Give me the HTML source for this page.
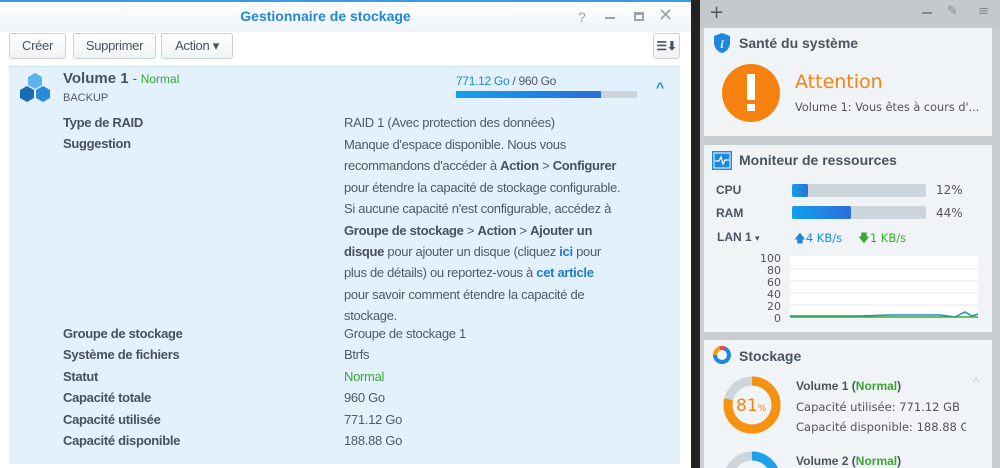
<!DOCTYPE html>
<html><head><meta charset="utf-8"><style>
*{margin:0;padding:0;box-sizing:border-box}
html,body{width:1000px;height:468px;overflow:hidden}
body{position:relative;background:#c9ced3;font-family:"Liberation Sans",sans-serif;color:#404a55}
#root{position:absolute;left:0;top:0;width:1000px;height:468px;overflow:hidden}
.abs{position:absolute}
#win{left:0;top:0;width:691px;height:468px;background:#fff;border-top:2px solid #3a9ae0}
#title{left:0;top:0;width:691px;height:30px;background:linear-gradient(#fff,#eef4fa);text-align:center;font:bold 14px "Liberation Sans",sans-serif;color:#1e88d8;line-height:28px;padding-right:40px}
.btn{top:31px;height:26px;border:1px solid #c8d0d8;border-radius:3px;background:linear-gradient(#fff,#f0f3f6);font-size:13px;line-height:24px;text-align:center;color:#4a5560;letter-spacing:-0.3px}
#panel{left:9px;top:64px;width:671px;height:398px;background:#e3f1fc;border-top:1px solid #cfe2f2}
.lbl{left:63px;font-weight:bold;font-size:13px;color:#47525d;letter-spacing:-0.3px}
.val{left:344px;font-size:13px;color:#4f5a65;letter-spacing:-0.3px}
.val b{color:#47525d}
.lk{color:#1e7ccc;font-weight:bold}
#sep{left:691px;top:0;width:9px;height:468px;background:#222}
.w{left:704px;width:288px;background:#f1f4f7}
.wt{font-weight:bold;font-size:14px;color:#4a545e;font-family:"Liberation Sans",sans-serif}
.ds{font-family:"DejaVu Sans",sans-serif}
</style></head><body><div id="root">
<div id="win" class="abs">
 <div id="title" class="abs">Gestionnaire de stockage</div>
 <div class="abs" style="left:578px;top:7px;font-size:14px;color:#9aa3ac">?</div>
 <div class="abs" style="left:605px;top:15px;width:10px;height:2px;background:#9aa3ac"></div>
 <div class="abs" style="left:634px;top:10px;width:10px;height:9px;border:2px solid #9aa3ac;border-top-width:3px"></div>
 <div class="abs" style="left:658px;top:3px;font-size:18px;color:#9aa3ac;font-family:'DejaVu Sans',sans-serif">✕</div>
 <div class="btn abs" style="left:9px;width:57px">Créer</div>
 <div class="btn abs" style="left:73px;width:83px">Supprimer</div>
 <div class="btn abs" style="left:161px;width:72px">Action ▾</div>
 <div class="btn abs" style="left:653px;width:27px;font-weight:bold;font-size:12px">☰⬇</div>
 <div id="panel" class="abs"></div>
 <svg class="abs" style="left:18px;top:70px" width="34" height="32" viewBox="0 0 34 32">
  <path d="M17 1l7 4v8l-7 4-7-4V5z" fill="#5ab4f0"/><path d="M9 14l7 4v8l-7 4-7-4v-8z" fill="#1a6cb4"/><path d="M25 14l7 4v8l-7 4-7-4v-8z" fill="#2a8ad8"/>
 </svg>
 <div class="abs" style="left:63px;top:68px;font-size:15px;font-weight:bold;color:#47525d">Volume 1 <span style="font-weight:normal;font-size:13px">- </span><span style="color:#3aa830;font-size:12px;font-weight:normal">Normal</span></div>
 <div class="abs" style="left:63px;top:90px;font-size:11px;color:#505a64">BACKUP</div>
 <div class="abs" style="left:456px;top:72px;font-size:12px;color:#4f5a65;letter-spacing:-0.3px"><span style="color:#1e88d8">771.12 Go</span> / 960 Go</div>
 <div class="abs" style="left:456px;top:89px;width:181px;height:7px;background:#ccd4dc"><div style="width:145px;height:7px;background:linear-gradient(90deg,#12a0ec,#2c6ed8)"></div></div>
 <div class="abs" style="left:656px;top:77px;font-size:14px;color:#1e88d8;font-weight:bold">^</div>
 <div class="lbl abs" style="top:113px">Type de RAID</div>
 <div class="val abs" style="top:113px">RAID 1 (Avec protection des données)</div>
 <div class="lbl abs" style="top:134px">Suggestion</div>
 <div class="val abs" style="top:132px;width:300px;line-height:21.4px">Manque d'espace disponible. Nous vous<br>recommandons d'accéder à <b>Action</b> &gt; <b>Configurer</b><br>pour étendre la capacité de stockage configurable.<br>Si aucune capacité n'est configurable, accédez à<br><b>Groupe de stockage</b> &gt; <b>Action</b> &gt; <b>Ajouter un</b><br><b>disque</b> pour ajouter un disque (cliquez <span class="lk">ici</span> pour<br>plus de détails) ou reportez-vous à <span class="lk">cet article</span><br>pour savoir comment étendre la capacité de<br>stockage.</div>
 <div class="lbl abs" style="top:324px">Groupe de stockage</div><div class="val abs" style="top:324px">Groupe de stockage 1</div>
 <div class="lbl abs" style="top:345px">Système de fichiers</div><div class="val abs" style="top:345px">Btrfs</div>
 <div class="lbl abs" style="top:367px">Statut</div><div class="val abs" style="top:367px;color:#3aa830">Normal</div>
 <div class="lbl abs" style="top:388px">Capacité totale</div><div class="val abs" style="top:388px">960 Go</div>
 <div class="lbl abs" style="top:410px">Capacité utilisée</div><div class="val abs" style="top:410px">771.12 Go</div>
 <div class="lbl abs" style="top:431px">Capacité disponible</div><div class="val abs" style="top:431px">188.88 Go</div>
</div>
<div id="sep" class="abs"></div>
<div class="abs" style="left:700px;top:0;width:300px;height:28px;background:#c4c9ce"></div>
<div class="abs ds" style="left:709px;top:2px;font-size:18px;color:#555">+</div>
<div class="abs" style="left:922px;top:12px;width:10px;height:2px;background:#888"></div>
<div class="abs ds" style="left:947px;top:4px;font-size:13px;color:#888">✎</div>
<div class="abs ds" style="left:978px;top:4px;font-size:13px;color:#888">≡</div>
<div class="w abs" style="top:28px;height:108px"></div>
<svg class="abs" style="left:712px;top:32px" width="20" height="22" viewBox="0 0 20 22"><path d="M10 1l8 3v7c0 5-4 9-8 10-4-1-8-5-8-10V4z" fill="#1e88e0"/><text x="10" y="16" fill="#fff" font-size="12" font-weight="bold" font-style="italic" text-anchor="middle" font-family="Liberation Serif">i</text></svg>
<div class="abs wt" style="left:739px;top:35px">Santé du système</div>
<div class="abs" style="left:722px;top:64px;width:58px;height:58px;border-radius:50%;background:#f5820f"></div>
<div class="abs" style="left:747px;top:74px;width:8px;height:26px;background:#fff"></div>
<div class="abs" style="left:747px;top:104px;width:8px;height:7px;background:#fff"></div>
<div class="abs ds" style="left:795px;top:71px;font-size:19px;color:#f5820f">Attention</div>
<div class="abs ds" style="left:795px;top:101px;font-size:11.3px;color:#555;width:192px;white-space:nowrap;overflow:hidden">Volume 1: Vous êtes à cours d'...</div>
<div class="w abs" style="top:145px;height:187px"></div>
<svg class="abs" style="left:712px;top:151px" width="20" height="19" viewBox="0 0 20 19"><rect x="0.5" y="0.5" width="19" height="18" fill="#1e88e0" stroke="#1e88e0"/><rect x="2" y="2" width="16" height="15" fill="none" stroke="#fff" stroke-width="1"/><path d="M3 10h4l2-4 2 7 2-4h4" stroke="#fff" fill="none" stroke-width="1.3"/></svg>
<div class="abs wt" style="left:739px;top:152px">Moniteur de ressources</div>
<div class="abs wt" style="left:716px;top:183px;font-size:12px">CPU</div>
<div class="abs" style="left:792px;top:184px;width:134px;height:13px;background:#ccd4dc;border-radius:2px"><div style="width:16px;height:13px;background:linear-gradient(90deg,#12a0ec,#2c6ed8);border-radius:2px"></div></div>
<div class="abs ds" style="left:936px;top:183px;font-size:12px;color:#555">12%</div>
<div class="abs wt" style="left:716px;top:206px;font-size:12px">RAM</div>
<div class="abs" style="left:792px;top:206px;width:134px;height:13px;background:#ccd4dc;border-radius:2px"><div style="width:59px;height:13px;background:linear-gradient(90deg,#12a0ec,#2c6ed8);border-radius:2px"></div></div>
<div class="abs ds" style="left:936px;top:206px;font-size:12px;color:#555">44%</div>
<div class="abs wt" style="left:717px;top:230px;font-size:12px">LAN 1 <span style="font-size:9px;font-weight:normal">▾</span></div>
<div class="abs ds" style="left:794px;top:231px;font-size:11.5px;color:#1e88e0">🡅4 KB/s</div>
<div class="abs ds" style="left:858px;top:231px;font-size:11.5px;color:#3aa830">🡇1 KB/s</div>
<div class="abs" style="left:790px;top:256px;width:188px;height:62px;background:#fff"></div>
<svg class="abs" style="left:760px;top:250px" width="222" height="75">
 <g font-family="DejaVu Sans" font-size="11" fill="#555" text-anchor="end">
 <text x="21" y="12">100</text><text x="21" y="24">80</text><text x="21" y="36">60</text><text x="21" y="48">40</text><text x="21" y="60">20</text><text x="21" y="72">0</text></g>
 <g stroke="#e6ebf0"><line x1="30" y1="19" x2="218" y2="19"/><line x1="30" y1="31" x2="218" y2="31"/><line x1="30" y1="43" x2="218" y2="43"/><line x1="30" y1="55" x2="218" y2="55"/></g>
 <path d="M30 66L100 66L130 65L180 65L195 67L205 62L212 66L218 64" stroke="#1e88e0" fill="none" stroke-width="1.5"/>
 <path d="M30 67L218 67" stroke="#3aa830" fill="none" stroke-width="1.5"/>
</svg>
<div class="w abs" style="top:340px;height:128px"></div>
<svg class="abs" style="left:712px;top:345px" width="20" height="20" viewBox="0 0 20 20"><circle cx="10" cy="10" r="7" fill="none" stroke="#1e88e0" stroke-width="4"/><path d="M3 10A7 7 0 0 1 8 3.2" stroke="#f5a00f" stroke-width="4" fill="none"/><path d="M8 3.2A7 7 0 0 1 13 3.7" stroke="#e84a4a" stroke-width="4" fill="none"/></svg>
<div class="abs wt" style="left:739px;top:348px">Stockage</div>
<svg class="abs" style="left:722px;top:375px" width="60" height="60"><circle cx="30" cy="30" r="24" fill="none" stroke="#ccd4dc" stroke-width="9"/><path d="M30 6A24 24 0 1 1 6.7 24.3" fill="none" stroke="#f5920f" stroke-width="9"/></svg>
<div class="abs ds" style="left:736px;top:396px;font-size:17px;color:#f5820f">81<span style="font-size:9px">%</span></div>
<div class="abs wt" style="left:796px;top:379px;font-size:12px">Volume 1 (<span style="color:#3aa830">Normal</span>)</div>
<div class="abs ds" style="left:796px;top:400px;font-size:11.5px;color:#555">Capacité utilisée: 771.12 GB</div>
<div class="abs ds" style="left:796px;top:420px;font-size:11.5px;color:#555;width:170px;overflow:hidden;white-space:nowrap">Capacité disponible: 188.88 GB</div>
<div class="abs" style="left:973px;top:374px;font-size:14px;color:#c8cdd2">^</div>
<svg class="abs" style="left:722px;top:450px" width="60" height="18"><circle cx="30" cy="30" r="24" fill="none" stroke="#ccd4dc" stroke-width="9"/><path d="M30 6A24 24 0 0 1 54 30" fill="none" stroke="#1ea0ec" stroke-width="9"/></svg>
<div class="abs wt" style="left:796px;top:455px;font-size:12px;line-height:13px">Volume 2 (<span style="color:#3aa830">Normal</span>)</div>
</div></body></html>
